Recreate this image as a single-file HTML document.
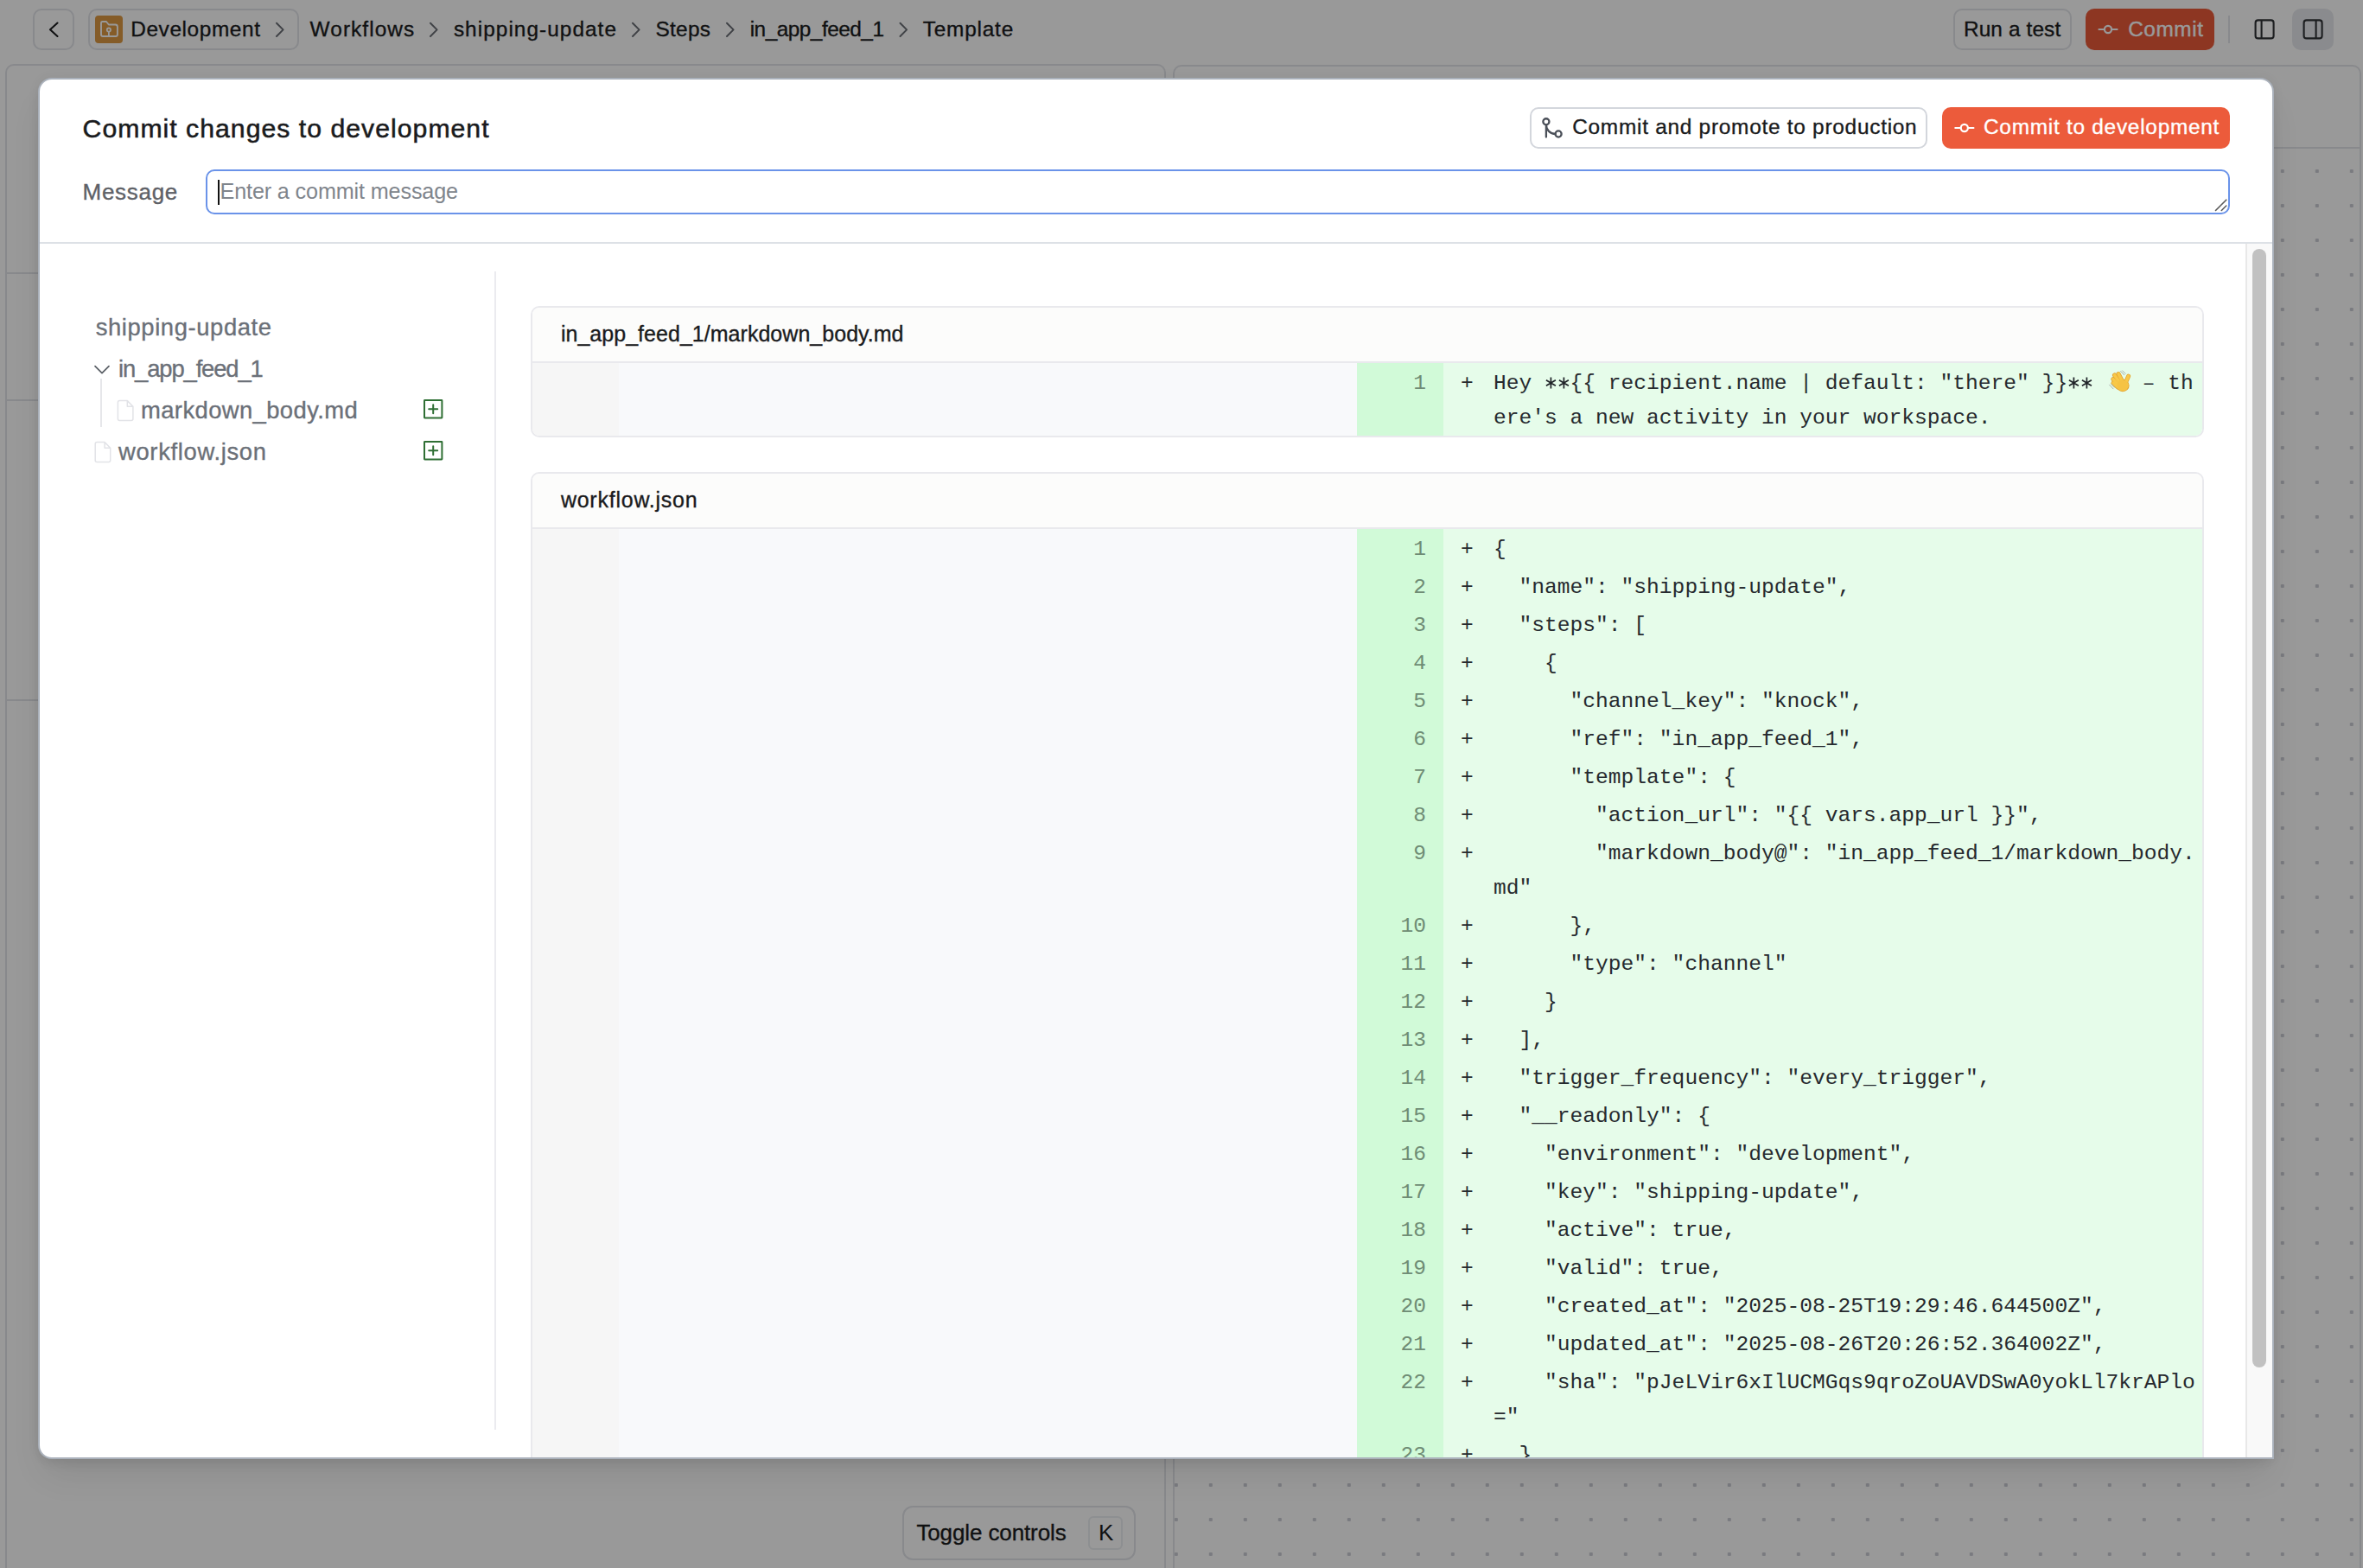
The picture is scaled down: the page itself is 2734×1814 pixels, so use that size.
<!DOCTYPE html>
<html><head><meta charset="utf-8">
<style>
*{box-sizing:border-box;margin:0;padding:0}
html,body{width:2734px;height:1814px;overflow:hidden;background:#fff}
body{position:relative;font-family:"Liberation Sans",sans-serif;color:#1c1d1f}
.abs{position:absolute}
.t{position:absolute;white-space:pre;line-height:1}
.btn{position:absolute;border:2px solid #e3e5ea;border-radius:10px;background:#fff}
svg{position:absolute;overflow:visible}
.card{border:2px solid #e9e9ed;border-radius:10px;overflow:hidden;background:#fff}
.hd{position:absolute;left:0;top:0;width:100%;height:64px;background:#fcfcfb;border-bottom:2px solid #e9e9ed}
.num{width:200px;text-align:right;font-family:"Liberation Mono",monospace;font-size:24.6px;line-height:40px;color:#6f8c75}
.code{font-family:"Liberation Mono",monospace;font-size:24.6px;line-height:40px;color:#262a2f}
.emo{display:inline-block;position:relative;width:27.5px;height:20px;vertical-align:baseline}
.emo svg{position:absolute}
.ast{display:inline-block;position:relative;width:14.76px;height:1px;vertical-align:baseline}
.ast svg{position:absolute}
</style></head><body>
<div id="page" class="abs" style="left:0;top:0;width:2734px;height:1814px">
<div class="btn" style="left:38px;top:10px;width:48px;height:48px"></div>
<div class="btn" style="left:102px;top:10px;width:244px;height:48px"></div>
<div class="abs" style="left:110px;top:18px;width:32px;height:32px;border-radius:4px;background:#de9943"></div>
<div class="t" style="left:151.2px;top:21.94px;font-size:24.4px;letter-spacing:0.608px;-webkit-text-stroke:0.35px currentColor">Development</div>
<div class="t" style="left:358.6px;top:21.94px;font-size:24.4px;letter-spacing:1.069px;-webkit-text-stroke:0.35px currentColor">Workflows</div>
<div class="t" style="left:524.9px;top:21.94px;font-size:24.4px;letter-spacing:1.036px;-webkit-text-stroke:0.35px currentColor">shipping-update</div>
<div class="t" style="left:758.5px;top:21.94px;font-size:24.4px;letter-spacing:0.281px;-webkit-text-stroke:0.35px currentColor">Steps</div>
<div class="t" style="left:867.7px;top:21.94px;font-size:24.4px;letter-spacing:-0.51px;-webkit-text-stroke:0.35px currentColor">in_app_feed_1</div>
<div class="t" style="left:1067.8px;top:21.94px;font-size:24.4px;letter-spacing:0.776px;-webkit-text-stroke:0.35px currentColor">Template</div>
<div class="btn" style="left:2260px;top:10px;width:137px;height:48px"></div>
<div class="t" style="left:2271.9px;top:21.94px;font-size:24.4px;letter-spacing:0.124px;-webkit-text-stroke:0.35px currentColor">Run a test</div>
<div class="abs" style="left:2413px;top:10px;width:149px;height:48px;border-radius:10px;background:#ec5a3a"></div>
<div class="t" style="left:2462.2px;top:22.14px;font-size:24.4px;letter-spacing:0.557px;color:#fff;-webkit-text-stroke:0.35px currentColor">Commit</div>
<div class="abs" style="left:2578px;top:18px;width:2px;height:32px;background:#e3e5ea"></div>
<div class="abs" style="left:2652px;top:10px;width:48px;height:48px;border-radius:10px;background:#e6e8ed"></div>

<div class="abs" style="left:6px;top:74px;width:1343px;height:1800px;border:2px solid #e3e5ea;border-radius:10px"></div>
<div class="abs" style="left:8px;top:315px;width:1340px;height:2px;background:#e3e5ea"></div>
<div class="abs" style="left:8px;top:462px;width:1340px;height:2px;background:#e3e5ea"></div>
<div class="abs" style="left:8px;top:809px;width:1340px;height:2px;background:#e3e5ea"></div>

<div class="abs" style="left:1044px;top:1742px;width:270px;height:63px;border:2px solid #e3e5ea;border-radius:12px;background:#fff"></div>
<div class="t" style="left:1060.4px;top:1760.19px;font-size:26px;letter-spacing:-0.114px;-webkit-text-stroke:0.35px currentColor">Toggle controls</div>
<div class="abs" style="left:1259px;top:1754px;width:40px;height:39px;border:2px solid #eceef2;border-radius:6px"></div>
<div class="t" style="left:1271px;top:1760.2px;font-size:26px">K</div>

<div class="abs" style="left:1357px;top:75px;width:1375px;height:1800px;border:2px solid #e3e5ea;border-radius:10px;overflow:hidden">
  <div class="abs" style="left:0;top:93px;width:100%;height:2px;background:#e3e5ea"></div>
  <div class="abs" style="left:0;top:96px;width:100%;height:1800px;background-image:radial-gradient(circle,#cbcdd5 2.0px,transparent 2.5px);background-size:40px 40px;background-position:-18.2px 5px"></div>
</div>
<svg style="left:0;top:0" width="2734" height="1814"><path d="M66.5 26.5 L58 34.2 L66.5 42" fill="none" stroke="#1c1d1f" stroke-width="2.1" stroke-linecap="round" stroke-linejoin="round"/><path d="M320 26.8 L327.6 34.4 L320 42.0" fill="none" stroke="#6b6f76" stroke-width="2.0" stroke-linecap="round" stroke-linejoin="round"/><path d="M498 26.8 L505.6 34.4 L498 42.0" fill="none" stroke="#6b6f76" stroke-width="2.0" stroke-linecap="round" stroke-linejoin="round"/><path d="M732 26.8 L739.6 34.4 L732 42.0" fill="none" stroke="#6b6f76" stroke-width="2.0" stroke-linecap="round" stroke-linejoin="round"/><path d="M841 26.8 L848.6 34.4 L841 42.0" fill="none" stroke="#6b6f76" stroke-width="2.0" stroke-linecap="round" stroke-linejoin="round"/><path d="M1041.5 26.8 L1049.1 34.4 L1041.5 42.0" fill="none" stroke="#6b6f76" stroke-width="2.0" stroke-linecap="round" stroke-linejoin="round"/><path d="M117 26.5 Q117 25 118.5 25 L123 25 L125.8 28.5 L133.5 28.5 Q135.9 28.5 135.9 31 L135.9 40 Q135.9 42 133.9 42 L119 42 Q117 42 117 40 Z" fill="none" stroke="#fff" stroke-width="1.9" stroke-linejoin="round"/><circle cx="125.9" cy="34.6" r="2.1" fill="none" stroke="#fff" stroke-width="1.8"/><path d="M125.9 36.8 L125.9 42" stroke="#fff" stroke-width="1.8"/><circle cx="2439" cy="34" r="4.1" fill="none" stroke="#fff" stroke-width="2.2"/><path d="M2428.5 34 L2434.8 34 M2443.2 34 L2449.6 34" stroke="#fff" stroke-width="2.2" stroke-linecap="round"/><rect x="2609.6" y="23.4" width="21" height="21" rx="3" fill="none" stroke="#303236" stroke-width="2.1"/><path d="M2616.6 23.4 L2616.6 44.4" stroke="#303236" stroke-width="2.1"/><rect x="2665.6" y="23.4" width="21" height="21" rx="3" fill="none" stroke="#303236" stroke-width="2.1"/><path d="M2679.6 23.4 L2679.6 44.4" stroke="#303236" stroke-width="2.1"/></svg>
</div>
<div class="abs" style="left:0;top:0;width:2734px;height:1814px;background:rgba(0,0,0,0.4)"></div>
<div id="modal" class="abs" style="left:44px;top:90px;width:2587px;height:1598px;border:2px solid #aab1bb;border-radius:16px 16px 0 16px;background:#fff;box-shadow:0 24px 40px -8px rgba(0,0,0,0.09),0 8px 16px -6px rgba(0,0,0,0.08),0 0 14px rgba(0,0,0,0.05);overflow:hidden">
<div class="abs" style="left:-46px;top:-92px;width:2734px;height:1814px">
<div class="t" style="left:95.6px;top:134.43px;font-size:30.2px;letter-spacing:1.024px;color:#1a1b1d;-webkit-text-stroke:0.55px #1a1b1d">Commit changes to development</div>
<div class="btn" style="left:1770px;top:124px;width:460px;height:48px;border-color:#d3d6dc"></div>
<div class="t" style="left:1819.2px;top:135.24px;font-size:24.4px;letter-spacing:0.741px;color:#1a1b1d;-webkit-text-stroke:0.35px currentColor">Commit and promote to production</div>
<div class="abs" style="left:2247px;top:124px;width:333px;height:48px;border-radius:10px;background:#ec5b3b"></div>
<div class="t" style="left:2295px;top:135.24px;font-size:24.4px;letter-spacing:0.741px;color:#fff;-webkit-text-stroke:0.35px currentColor">Commit to development</div>
<div class="t" style="left:95.6px;top:208.79px;font-size:26px;letter-spacing:0.7px;color:#5e6167;-webkit-text-stroke:0.35px currentColor">Message</div>
<div class="abs" style="left:238px;top:196px;width:2342px;height:52px;border:2px solid #6a93e9;border-radius:10px"></div>
<div class="t" style="left:254.5px;top:209.46px;font-size:25.2px;letter-spacing:-0.142px;color:#80858c">Enter a commit message</div>
<div class="abs" style="left:252px;top:208px;width:2.2px;height:28.6px;background:#111"></div>
<div class="abs" style="left:0;top:280px;width:2734px;height:2px;background:#dde1e6"></div>
<div class="abs" style="left:572px;top:314px;width:2px;height:1340px;background:#ebebef"></div>
<div class="t" style="left:110.7px;top:365.0px;font-size:27.4px;letter-spacing:0.597px;color:#6b7078;-webkit-text-stroke:0.35px currentColor">shipping-update</div>
<div class="t" style="left:137px;top:413.1px;font-size:27.4px;letter-spacing:-1.122px;color:#6b7078;-webkit-text-stroke:0.35px currentColor">in_app_feed_1</div>
<div class="abs" style="left:116.2px;top:438px;width:1.6px;height:56px;background:#e6e7ea"></div>
<div class="t" style="left:163px;top:461.3px;font-size:27.4px;letter-spacing:0.406px;color:#6b7078;-webkit-text-stroke:0.35px currentColor">markdown_body.md</div>
<div class="t" style="left:137px;top:508.8px;font-size:27.4px;letter-spacing:0.676px;color:#6b7078;-webkit-text-stroke:0.35px currentColor">workflow.json</div>
<div class="abs card" style="left:614px;top:354px;width:1936px;height:152px">
<div class="hd"></div>
<div class="abs" style="left:0;top:64px;width:100px;height:84px;background:#f6f6f6"></div>
<div class="abs" style="left:100px;top:64px;width:854px;height:84px;background:#f8f9fb"></div>
<div class="abs" style="left:954px;top:64px;width:100px;height:84px;background:#d1fad8"></div>
<div class="abs" style="left:1054px;top:64px;width:900px;height:84px;background:#e6fcea"></div>
</div>
<div class="t" style="left:648.9px;top:374.03px;font-size:25px;letter-spacing:0.033px;color:#1a1b1d;-webkit-text-stroke:0.35px currentColor">in_app_feed_1/markdown_body.md</div>
<div class="t num" style="left:1450px;top:424.40px">1</div>
<div class="t code" style="left:1690px;top:424.40px">+</div>
<div class="t code" style="left:1728px;top:424.40px">Hey <span class="ast"><svg width="15" height="16" viewBox="0 0 15 16" style="left:0;top:-14.6px"><path d="M7.4 1.6 L7.4 14.4 M1.9 4.8 L12.9 11.2 M1.9 11.2 L12.9 4.8" stroke="#1f2328" stroke-width="1.7" stroke-linecap="butt"/></svg></span><span class="ast"><svg width="15" height="16" viewBox="0 0 15 16" style="left:0;top:-14.6px"><path d="M7.4 1.6 L7.4 14.4 M1.9 4.8 L12.9 11.2 M1.9 11.2 L12.9 4.8" stroke="#1f2328" stroke-width="1.7" stroke-linecap="butt"/></svg></span>{{ recipient.name | default: "there" }}<span class="ast"><svg width="15" height="16" viewBox="0 0 15 16" style="left:0;top:-14.6px"><path d="M7.4 1.6 L7.4 14.4 M1.9 4.8 L12.9 11.2 M1.9 11.2 L12.9 4.8" stroke="#1f2328" stroke-width="1.7" stroke-linecap="butt"/></svg></span><span class="ast"><svg width="15" height="16" viewBox="0 0 15 16" style="left:0;top:-14.6px"><path d="M7.4 1.6 L7.4 14.4 M1.9 4.8 L12.9 11.2 M1.9 11.2 L12.9 4.8" stroke="#1f2328" stroke-width="1.7" stroke-linecap="butt"/></svg></span> <span class="emo"></span> – th<br>ere's a new activity in your workspace.</div>
<div class="abs card" style="left:614px;top:546px;width:1936px;height:1204px">
<div class="hd"></div>
<div class="abs" style="left:0;top:64px;width:100px;height:1136px;background:#f6f6f6"></div>
<div class="abs" style="left:100px;top:64px;width:854px;height:1136px;background:#f8f9fb"></div>
<div class="abs" style="left:954px;top:64px;width:100px;height:1136px;background:#d1fad8"></div>
<div class="abs" style="left:1054px;top:64px;width:900px;height:1136px;background:#e6fcea"></div>
</div>
<div class="t" style="left:648.9px;top:565.93px;font-size:25px;letter-spacing:0.761px;color:#1a1b1d;-webkit-text-stroke:0.35px currentColor">workflow.json</div>
<div class="t num" style="left:1450px;top:616.40px">1</div>
<div class="t code" style="left:1690px;top:616.40px">+</div>
<div class="t code" style="left:1728px;top:616.40px">{</div>
<div class="t num" style="left:1450px;top:660.40px">2</div>
<div class="t code" style="left:1690px;top:660.40px">+</div>
<div class="t code" style="left:1728px;top:660.40px">  "name": "shipping-update",</div>
<div class="t num" style="left:1450px;top:704.40px">3</div>
<div class="t code" style="left:1690px;top:704.40px">+</div>
<div class="t code" style="left:1728px;top:704.40px">  "steps": [</div>
<div class="t num" style="left:1450px;top:748.40px">4</div>
<div class="t code" style="left:1690px;top:748.40px">+</div>
<div class="t code" style="left:1728px;top:748.40px">    {</div>
<div class="t num" style="left:1450px;top:792.40px">5</div>
<div class="t code" style="left:1690px;top:792.40px">+</div>
<div class="t code" style="left:1728px;top:792.40px">      "channel_key": "knock",</div>
<div class="t num" style="left:1450px;top:836.40px">6</div>
<div class="t code" style="left:1690px;top:836.40px">+</div>
<div class="t code" style="left:1728px;top:836.40px">      "ref": "in_app_feed_1",</div>
<div class="t num" style="left:1450px;top:880.40px">7</div>
<div class="t code" style="left:1690px;top:880.40px">+</div>
<div class="t code" style="left:1728px;top:880.40px">      "template": {</div>
<div class="t num" style="left:1450px;top:924.40px">8</div>
<div class="t code" style="left:1690px;top:924.40px">+</div>
<div class="t code" style="left:1728px;top:924.40px">        "action_url": "{{ vars.app_url }}",</div>
<div class="t num" style="left:1450px;top:968.40px">9</div>
<div class="t code" style="left:1690px;top:968.40px">+</div>
<div class="t code" style="left:1728px;top:968.40px">        "markdown_body@": "in_app_feed_1/markdown_body.<br>md"</div>
<div class="t num" style="left:1450px;top:1052.40px">10</div>
<div class="t code" style="left:1690px;top:1052.40px">+</div>
<div class="t code" style="left:1728px;top:1052.40px">      },</div>
<div class="t num" style="left:1450px;top:1096.40px">11</div>
<div class="t code" style="left:1690px;top:1096.40px">+</div>
<div class="t code" style="left:1728px;top:1096.40px">      "type": "channel"</div>
<div class="t num" style="left:1450px;top:1140.40px">12</div>
<div class="t code" style="left:1690px;top:1140.40px">+</div>
<div class="t code" style="left:1728px;top:1140.40px">    }</div>
<div class="t num" style="left:1450px;top:1184.40px">13</div>
<div class="t code" style="left:1690px;top:1184.40px">+</div>
<div class="t code" style="left:1728px;top:1184.40px">  ],</div>
<div class="t num" style="left:1450px;top:1228.40px">14</div>
<div class="t code" style="left:1690px;top:1228.40px">+</div>
<div class="t code" style="left:1728px;top:1228.40px">  "trigger_frequency": "every_trigger",</div>
<div class="t num" style="left:1450px;top:1272.40px">15</div>
<div class="t code" style="left:1690px;top:1272.40px">+</div>
<div class="t code" style="left:1728px;top:1272.40px">  "__readonly": {</div>
<div class="t num" style="left:1450px;top:1316.40px">16</div>
<div class="t code" style="left:1690px;top:1316.40px">+</div>
<div class="t code" style="left:1728px;top:1316.40px">    "environment": "development",</div>
<div class="t num" style="left:1450px;top:1360.40px">17</div>
<div class="t code" style="left:1690px;top:1360.40px">+</div>
<div class="t code" style="left:1728px;top:1360.40px">    "key": "shipping-update",</div>
<div class="t num" style="left:1450px;top:1404.40px">18</div>
<div class="t code" style="left:1690px;top:1404.40px">+</div>
<div class="t code" style="left:1728px;top:1404.40px">    "active": true,</div>
<div class="t num" style="left:1450px;top:1448.40px">19</div>
<div class="t code" style="left:1690px;top:1448.40px">+</div>
<div class="t code" style="left:1728px;top:1448.40px">    "valid": true,</div>
<div class="t num" style="left:1450px;top:1492.40px">20</div>
<div class="t code" style="left:1690px;top:1492.40px">+</div>
<div class="t code" style="left:1728px;top:1492.40px">    "created_at": "2025-08-25T19:29:46.644500Z",</div>
<div class="t num" style="left:1450px;top:1536.40px">21</div>
<div class="t code" style="left:1690px;top:1536.40px">+</div>
<div class="t code" style="left:1728px;top:1536.40px">    "updated_at": "2025-08-26T20:26:52.364002Z",</div>
<div class="t num" style="left:1450px;top:1580.40px">22</div>
<div class="t code" style="left:1690px;top:1580.40px">+</div>
<div class="t code" style="left:1728px;top:1580.40px">    "sha": "pJeLVir6xIlUCMGqs9qroZoUAVDSwA0yokLl7krAPlo<br>="</div>
<div class="t num" style="left:1450px;top:1664.40px">23</div>
<div class="t code" style="left:1690px;top:1664.40px">+</div>
<div class="t code" style="left:1728px;top:1664.40px">  }</div>
<div class="t num" style="left:1450px;top:1708.40px">24</div>
<div class="t code" style="left:1690px;top:1708.40px">+</div>
<div class="t code" style="left:1728px;top:1708.40px">}</div>
<div class="abs" style="left:2598px;top:282px;width:31px;height:1420px;background:#f9f9f9;border-left:2px solid #e8e8e8"></div>
<div class="abs" style="left:2606px;top:288px;width:16px;height:1294px;border-radius:8px;background:#c1c1c1"></div>
<svg style="left:0;top:0" width="2734" height="1814"><g fill="none" stroke="#4b5059" stroke-width="2.3" stroke-linecap="round" stroke-linejoin="round"><circle cx="1803.09" cy="154.99" r="3.55"/><circle cx="1788.90" cy="140.80" r="3.55"/><path d="M1788.90 158.54 L1788.90 144.35 A10.65 10.65 0 0 0 1799.54 154.99"/></g><circle cx="2272.8" cy="148" r="4.1" fill="none" stroke="#fff" stroke-width="2.2"/><path d="M2262.3 148 L2268.6 148 M2277 148 L2283.4 148" stroke="#fff" stroke-width="2.2" stroke-linecap="round"/><path d="M2563.5 243.5 L2575.8 231.2 M2570.3 243.5 L2575.8 238" stroke="#5a5a5a" stroke-width="1.6" stroke-linecap="round"/><path d="M110 423.6 L118 431.6 L126 423.6" fill="none" stroke="#5a5f66" stroke-width="1.7" stroke-linecap="round" stroke-linejoin="round"/><path d="M138.4 463.6 L147.3 463.6 L153.9 470.20000000000005 L153.9 484.6 Q153.9 486.6 151.9 486.6 L138.4 486.6 Q136.4 486.6 136.4 484.6 L136.4 465.6 Q136.4 463.6 138.4 463.6 Z M147.3 463.6 L147.3 470.20000000000005 L153.9 470.20000000000005" fill="none" stroke="#e2e3e7" stroke-width="1.5" stroke-linejoin="round"/><path d="M112.2 511.6 L121.10000000000001 511.6 L127.7 518.2 L127.7 532.6 Q127.7 534.6 125.7 534.6 L112.2 534.6 Q110.2 534.6 110.2 532.6 L110.2 513.6 Q110.2 511.6 112.2 511.6 Z M121.10000000000001 511.6 L121.10000000000001 518.2 L127.7 518.2" fill="none" stroke="#e2e3e7" stroke-width="1.5" stroke-linejoin="round"/><rect x="491" y="463" width="20.4" height="20.4" rx="0.4" fill="none" stroke="#2f6f34" stroke-width="2"/><path d="M496.2 473.2 L506.2 473.2 M501.2 468.2 L501.2 478.2" stroke="#2f6f34" stroke-width="2" stroke-linecap="round"/><rect x="491" y="511" width="20.4" height="20.4" rx="0.4" fill="none" stroke="#2f6f34" stroke-width="2"/><path d="M496.2 521.2 L506.2 521.2 M501.2 516.2 L501.2 526.2" stroke="#2f6f34" stroke-width="2" stroke-linecap="round"/><g><path d="M2451 432.5 L2456.5 443" stroke="#e0a030" stroke-width="5.0" stroke-linecap="round"/><path d="M2446.5 434 L2453.5 444" stroke="#e0a030" stroke-width="5.0" stroke-linecap="round"/><path d="M2444.8 438.6 L2451.5 446" stroke="#e0a030" stroke-width="5.0" stroke-linecap="round"/><path d="M2445 443.2 L2450.5 448" stroke="#e0a030" stroke-width="5.0" stroke-linecap="round"/><path d="M2462.6 435.2 L2459 443.5" stroke="#e0a030" stroke-width="5.0" stroke-linecap="round"/><ellipse cx="2456" cy="446" rx="7.6" ry="7.2" fill="#e0a030"/><path d="M2451 432.5 L2456.5 443" stroke="#f8c848" stroke-width="3.6" stroke-linecap="round"/><path d="M2446.5 434 L2453.5 444" stroke="#f8c848" stroke-width="3.6" stroke-linecap="round"/><path d="M2444.8 438.6 L2451.5 446" stroke="#f8c848" stroke-width="3.6" stroke-linecap="round"/><path d="M2445 443.2 L2450.5 448" stroke="#f8c848" stroke-width="3.6" stroke-linecap="round"/><path d="M2462.6 435.2 L2459 443.5" stroke="#f8c848" stroke-width="3.6" stroke-linecap="round"/><ellipse cx="2456" cy="446" rx="6.8" ry="6.4" fill="#f6c343"/><path d="M2440.6 445.2 L2445 449.8 M2442.6 444 L2446.6 448.2 M2453.6 429.4 L2457.8 433.8 M2455.6 428.8 L2459.2 432.4" stroke="#a3aaa6" stroke-width="0.9" stroke-linecap="round"/></g></svg>
</div>
</div>
</body></html>
